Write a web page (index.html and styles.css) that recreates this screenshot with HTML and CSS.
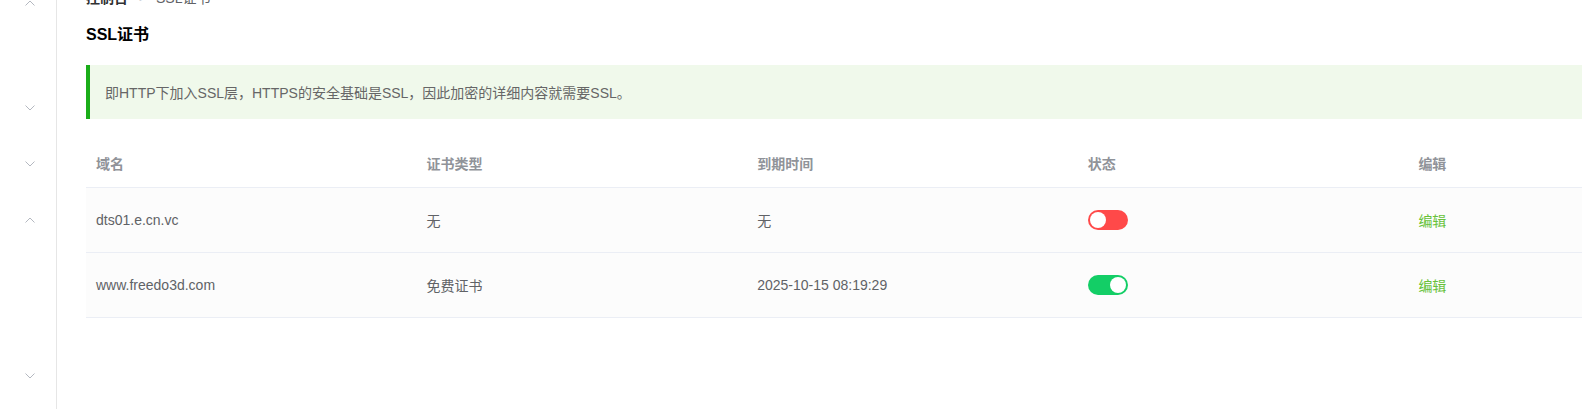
FILE: index.html
```html
<!DOCTYPE html>
<html lang="zh-CN">
<head>
<meta charset="utf-8">
<title>SSL证书</title>
<link rel="stylesheet" href="styles.css">
</head>
<body>
<div class="app">
  <aside class="sidebar">
    <div class="menu-row first"><svg class="chev up" width="10" height="6" viewBox="0 0 10 6"><polyline points="0.5,5.5 5,1 9.5,5.5"/></svg></div>
    <div class="menu-gap"></div>
    <div class="menu-row"><svg class="chev" width="10" height="6" viewBox="0 0 10 6"><polyline points="0.5,0.5 5,5 9.5,0.5"/></svg></div>
    <div class="menu-row"><svg class="chev" width="10" height="6" viewBox="0 0 10 6"><polyline points="0.5,0.5 5,5 9.5,0.5"/></svg></div>
    <div class="menu-row"><svg class="chev up" width="10" height="6" viewBox="0 0 10 6"><polyline points="0.5,5.5 5,1 9.5,5.5"/></svg></div>
    <div class="menu-gap tall"></div>
    <div class="menu-row"><svg class="chev" width="10" height="6" viewBox="0 0 10 6"><polyline points="0.5,0.5 5,5 9.5,0.5"/></svg></div>
  </aside>
  <main class="main">
    <div class="content">
      <nav class="breadcrumb">
        <span class="crumb strong">控制台</span>
        <span class="sep">&gt;</span>
        <span class="crumb">SSL证书</span>
      </nav>
      <h1 class="title">SSL证书</h1>
      <div class="alert">即HTTP下加入SSL层，HTTPS的安全基础是SSL，因此加密的详细内容就需要SSL。</div>
      <div class="table">
        <div class="tr head">
          <div class="td">域名</div>
          <div class="td">证书类型</div>
          <div class="td">到期时间</div>
          <div class="td">状态</div>
          <div class="td">编辑</div>
        </div>
        <div class="tr">
          <div class="td">dts01.e.cn.vc</div>
          <div class="td">无</div>
          <div class="td">无</div>
          <div class="td"><span class="switch off"><span class="knob"></span></span></div>
          <div class="td"><a class="edit">编辑</a></div>
        </div>
        <div class="tr">
          <div class="td">www.freedo3d.com</div>
          <div class="td">免费证书</div>
          <div class="td">2025-10-15 08:19:29</div>
          <div class="td"><span class="switch on"><span class="knob"></span></span></div>
          <div class="td"><a class="edit">编辑</a></div>
        </div>
      </div>
    </div>
  </main>
</div>
</body>
</html>
```

FILE: styles.css
```css
* { box-sizing: border-box; }
html, body {
  margin: 0;
  padding: 0;
  background: #fff;
  overflow: hidden;
  font-family: "Liberation Sans", "Noto Sans CJK SC", sans-serif;
  font-size: 14px;
  color: #606266;
}
.app {
  display: flex;
  height: 409px;
}
.sidebar {
  flex: 0 0 57px;
  border-right: 1px solid #e6e6e6;
  display: flex;
  flex-direction: column;
}
.menu-row {
  height: 56px;
  flex: 0 0 56px;
  display: flex;
  align-items: center;
  justify-content: center;
  padding-left: 3px;
}
.menu-row.first { margin-top: -25px; }
.menu-gap { flex: 0 0 49px; }
.menu-gap.tall { flex: 0 0 100px; }
.chev polyline {
  fill: none;
  stroke: #b4b8c0;
  stroke-width: 1;
}
.main {
  flex: 1 1 auto;
  padding-left: 29px;
}
.content {
  width: 1653px;
}
.breadcrumb {
  margin-top: -9px;
  height: 14px;
  line-height: 14px;
  display: flex;
  align-items: center;
}
.crumb { color: #606266; }
.crumb.strong { color: #303133; font-weight: bold; }
.sep {
  color: #c0c4cc;
  margin: 0 10px 0 11px;
  font-size: 12px;
}
.title {
  margin: 19px 0 0;
  font-size: 16px;
  line-height: 22px;
  font-weight: bold;
  color: #000;
}
.alert {
  margin-top: 19px;
  height: 54px;
  display: flex;
  align-items: center;
  background: #f0f9eb;
  border-left: 4px solid #1aad19;
  padding-left: 15px;
  color: #666;
  font-size: 14px;
}
.table {
  margin-top: 19px;
}
.tr {
  display: flex;
  height: 65px;
  border-bottom: 1px solid #ebeef5;
  background: #fcfcfc;
  align-items: center;
}
.tr.head {
  height: 50px;
  background: #fff;
  color: #909399;
  font-weight: bold;
}
.td {
  flex: 1 1 0;
  padding-left: 10px;
  display: flex;
  align-items: center;
}
.switch {
  position: relative;
  display: inline-block;
  width: 40px;
  height: 20px;
  border-radius: 10px;
}
.switch.off { background: #ff4949; }
.switch.on { background: #13ce66; }
.knob {
  position: absolute;
  top: 2px;
  width: 16px;
  height: 16px;
  border-radius: 50%;
  background: #fff;
}
.switch.off .knob { left: 2px; }
.switch.on .knob { right: 2px; }
.edit {
  color: #67c23a;
  text-decoration: none;
}
```
